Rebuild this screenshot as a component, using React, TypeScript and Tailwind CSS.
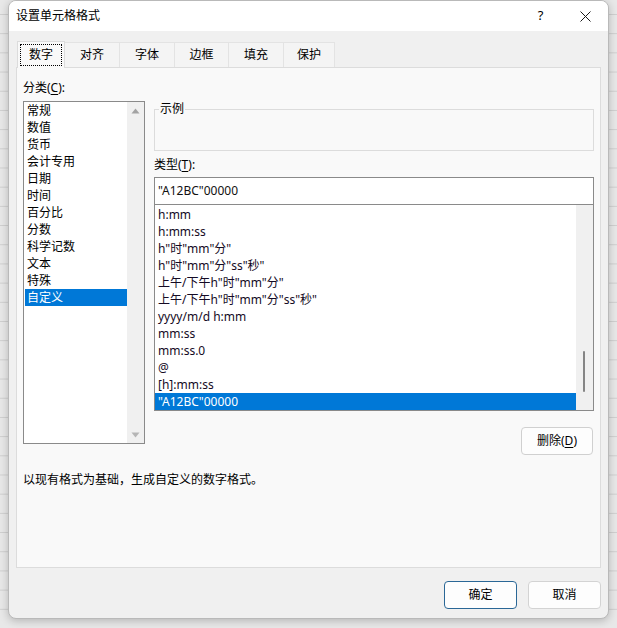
import React from 'react';

const categories = ['常规', '数值', '货币', '会计专用', '日期', '时间', '百分比', '分数', '科学记数', '文本', '特殊', '自定义'];

const formats = [
  'h:mm',
  'h:mm:ss',
  'h"时"mm"分"',
  'h"时"mm"分"ss"秒"',
  '上午/下午h"时"mm"分"',
  '上午/下午h"时"mm"分"ss"秒"',
  'yyyy/m/d h:mm',
  'mm:ss',
  'mm:ss.0',
  '@',
  '[h]:mm:ss',
  '"A12BC"00000',
];

const tabs = [
  { label: '数字', w: 'w-[48px]' },
  { label: '对齐', w: 'w-[55px]' },
  { label: '字体', w: 'w-[55px]' },
  { label: '边框', w: 'w-[54px]' },
  { label: '填充', w: 'w-[55px]' },
  { label: '保护', w: 'w-[51px]' },
];

function CloseIcon() {
  return (
    <svg width="11" height="11" viewBox="0 0 11 11" fill="none">
      <path d="M0.5 0.5L10.5 10.5M10.5 0.5L0.5 10.5" stroke="#1a1a1a" strokeWidth="1" />
    </svg>
  );
}

function Arrow({ up }: { up?: boolean }) {
  return (
    <svg width="9" height="6" viewBox="0 0 9 6">
      {up ? <path d="M0.5 5.5L4.5 0.5L8.5 5.5Z" fill="#a3a3a3" /> : <path d="M0.5 0.5L4.5 5.5L8.5 0.5Z" fill="#b5b5b5" />}
    </svg>
  );
}

export default function App() {
  return (
    <div className="w-[617px] h-[628px] overflow-hidden bg-[#e8e8e8] bg-[linear-gradient(to_bottom,#cfcfcf_0,#cfcfcf_1px,transparent_1px)] bg-[length:100%_19.2px] bg-[position:0_14px] pl-[8px] font-['Noto_Sans','Noto_Sans_CJK_SC',sans-serif] text-[12px] text-black">
      <div className="w-[601px] h-[619px] rounded-lg border border-[#b9b9b9] bg-[#f0f0f0] shadow-[0_2px_8px_rgba(0,0,0,0.22)] overflow-hidden flex flex-col">
        {/* Title bar */}
        <div className="h-[30px] bg-white flex items-center pl-[7px]">
          <span className="leading-none">设置单元格格式</span>
          <div className="ml-auto flex h-full">
            <div className="w-[45px] flex items-center justify-center text-[13px]">?</div>
            <div className="w-[45px] flex items-center justify-center">
              <CloseIcon />
            </div>
          </div>
        </div>

        {/* Tabs */}
        <div className="mt-[10px] pl-[8px] flex items-start h-[27px] mb-[-1px] relative z-10">
          {tabs.map((t, i) =>
            i === 0 ? (
              <div key={t.label} className={`${t.w} h-[27px] bg-[#f9f9f9] border border-b-0 border-[#dcdcdc] p-[2px]`}>
                <div className="h-full border border-dotted border-black flex items-center justify-center">{t.label}</div>
              </div>
            ) : (
              <div
                key={t.label}
                className={`${t.w} h-[25px] mt-[1px] bg-[#f4f4f4] border-t border-r border-[#e3e3e3] flex items-center justify-center`}
              >
                {t.label}
              </div>
            ),
          )}
        </div>

        {/* Panel */}
        <div className="mx-[7px] h-[501px] border border-[#dcdcdc] bg-[#f9f9f9] flex flex-col">
          <div className="flex pt-[12px] pl-[6px]">
            {/* Category */}
            <div className="flex flex-col">
              <div className="leading-[16px] h-[16px]">
                分类(<span className="underline underline-offset-2">C</span>):
              </div>
              <div className="mt-[5px] w-[122px] h-[343px] border border-[#8a8a8a] bg-white flex">
                <div className="flex-1">
                  {categories.map((c, i) => (
                    <div
                      key={c}
                      className={`h-[17px] leading-[17px] pl-[2px] ml-px ${i === 11 ? 'bg-[#0078d7] text-white' : ''}`}
                    >
                      {c}
                    </div>
                  ))}
                </div>
                <div className="w-[17px] bg-[#f0f0f0] flex flex-col justify-between">
                  <div className="h-[17px] flex items-center justify-center">
                    <Arrow up />
                  </div>
                  <div className="h-[17px] flex items-center justify-center">
                    <Arrow />
                  </div>
                </div>
              </div>
            </div>

            {/* Type */}
            <div className="ml-[9px] w-[440px] mt-[29px] flex flex-col">
              <div className="h-[42px] border border-[#dcdcdc] relative">
                <span className="absolute left-[4px] -top-[9px] leading-[16px] px-[1px] bg-[#f9f9f9]">示例</span>
              </div>
              <div className="mt-[6px] leading-[16px] h-[16px]">
                类型(<span className="underline underline-offset-2">T</span>):
              </div>
              <div className="mt-[4px] h-[28px] border border-[#8a8a8a] bg-white flex items-center pl-[3px] text-[#111]">
                "A12BC"00000
              </div>
              <div className="h-[206px] border border-t-0 border-[#8a8a8a] bg-white flex">
                <div className="flex-1 pt-px">
                  {formats.map((f, i) => (
                    <div
                      key={f}
                      className={`h-[17px] leading-[17px] pl-[3px] whitespace-nowrap ${
                        i === 11 ? 'bg-[#0078d7] text-white' : 'text-[#140a24]'
                      }`}
                    >
                      {f}
                    </div>
                  ))}
                </div>
                <div className="w-[17px] bg-[#f0f0f0] relative">
                  <div className="absolute left-[7px] top-[146px] w-[2px] h-[41px] rounded-full bg-[#858585]" />
                </div>
              </div>
              <button className="mt-[16px] self-end mr-px h-[28px] w-[72px] rounded-[4px] border border-[#d0d0d0] bg-[#fdfdfd]">
                删除(<span className="underline underline-offset-2">D</span>)
              </button>
            </div>
          </div>

          <div className="mt-[17px] pl-[6px] leading-[16px]">以现有格式为基础，生成自定义的数字格式。</div>
        </div>

        {/* Footer */}
        <div className="mt-[13px] flex justify-end gap-[11px] pr-[7px]">
          <button className="h-[28px] w-[73px] rounded-[4px] border border-[#2a6796] bg-[#fdfdfd]">确定</button>
          <button className="h-[28px] w-[73px] rounded-[4px] border border-[#d3d3d3] bg-[#fdfdfd]">取消</button>
        </div>
      </div>
    </div>
  );
}
